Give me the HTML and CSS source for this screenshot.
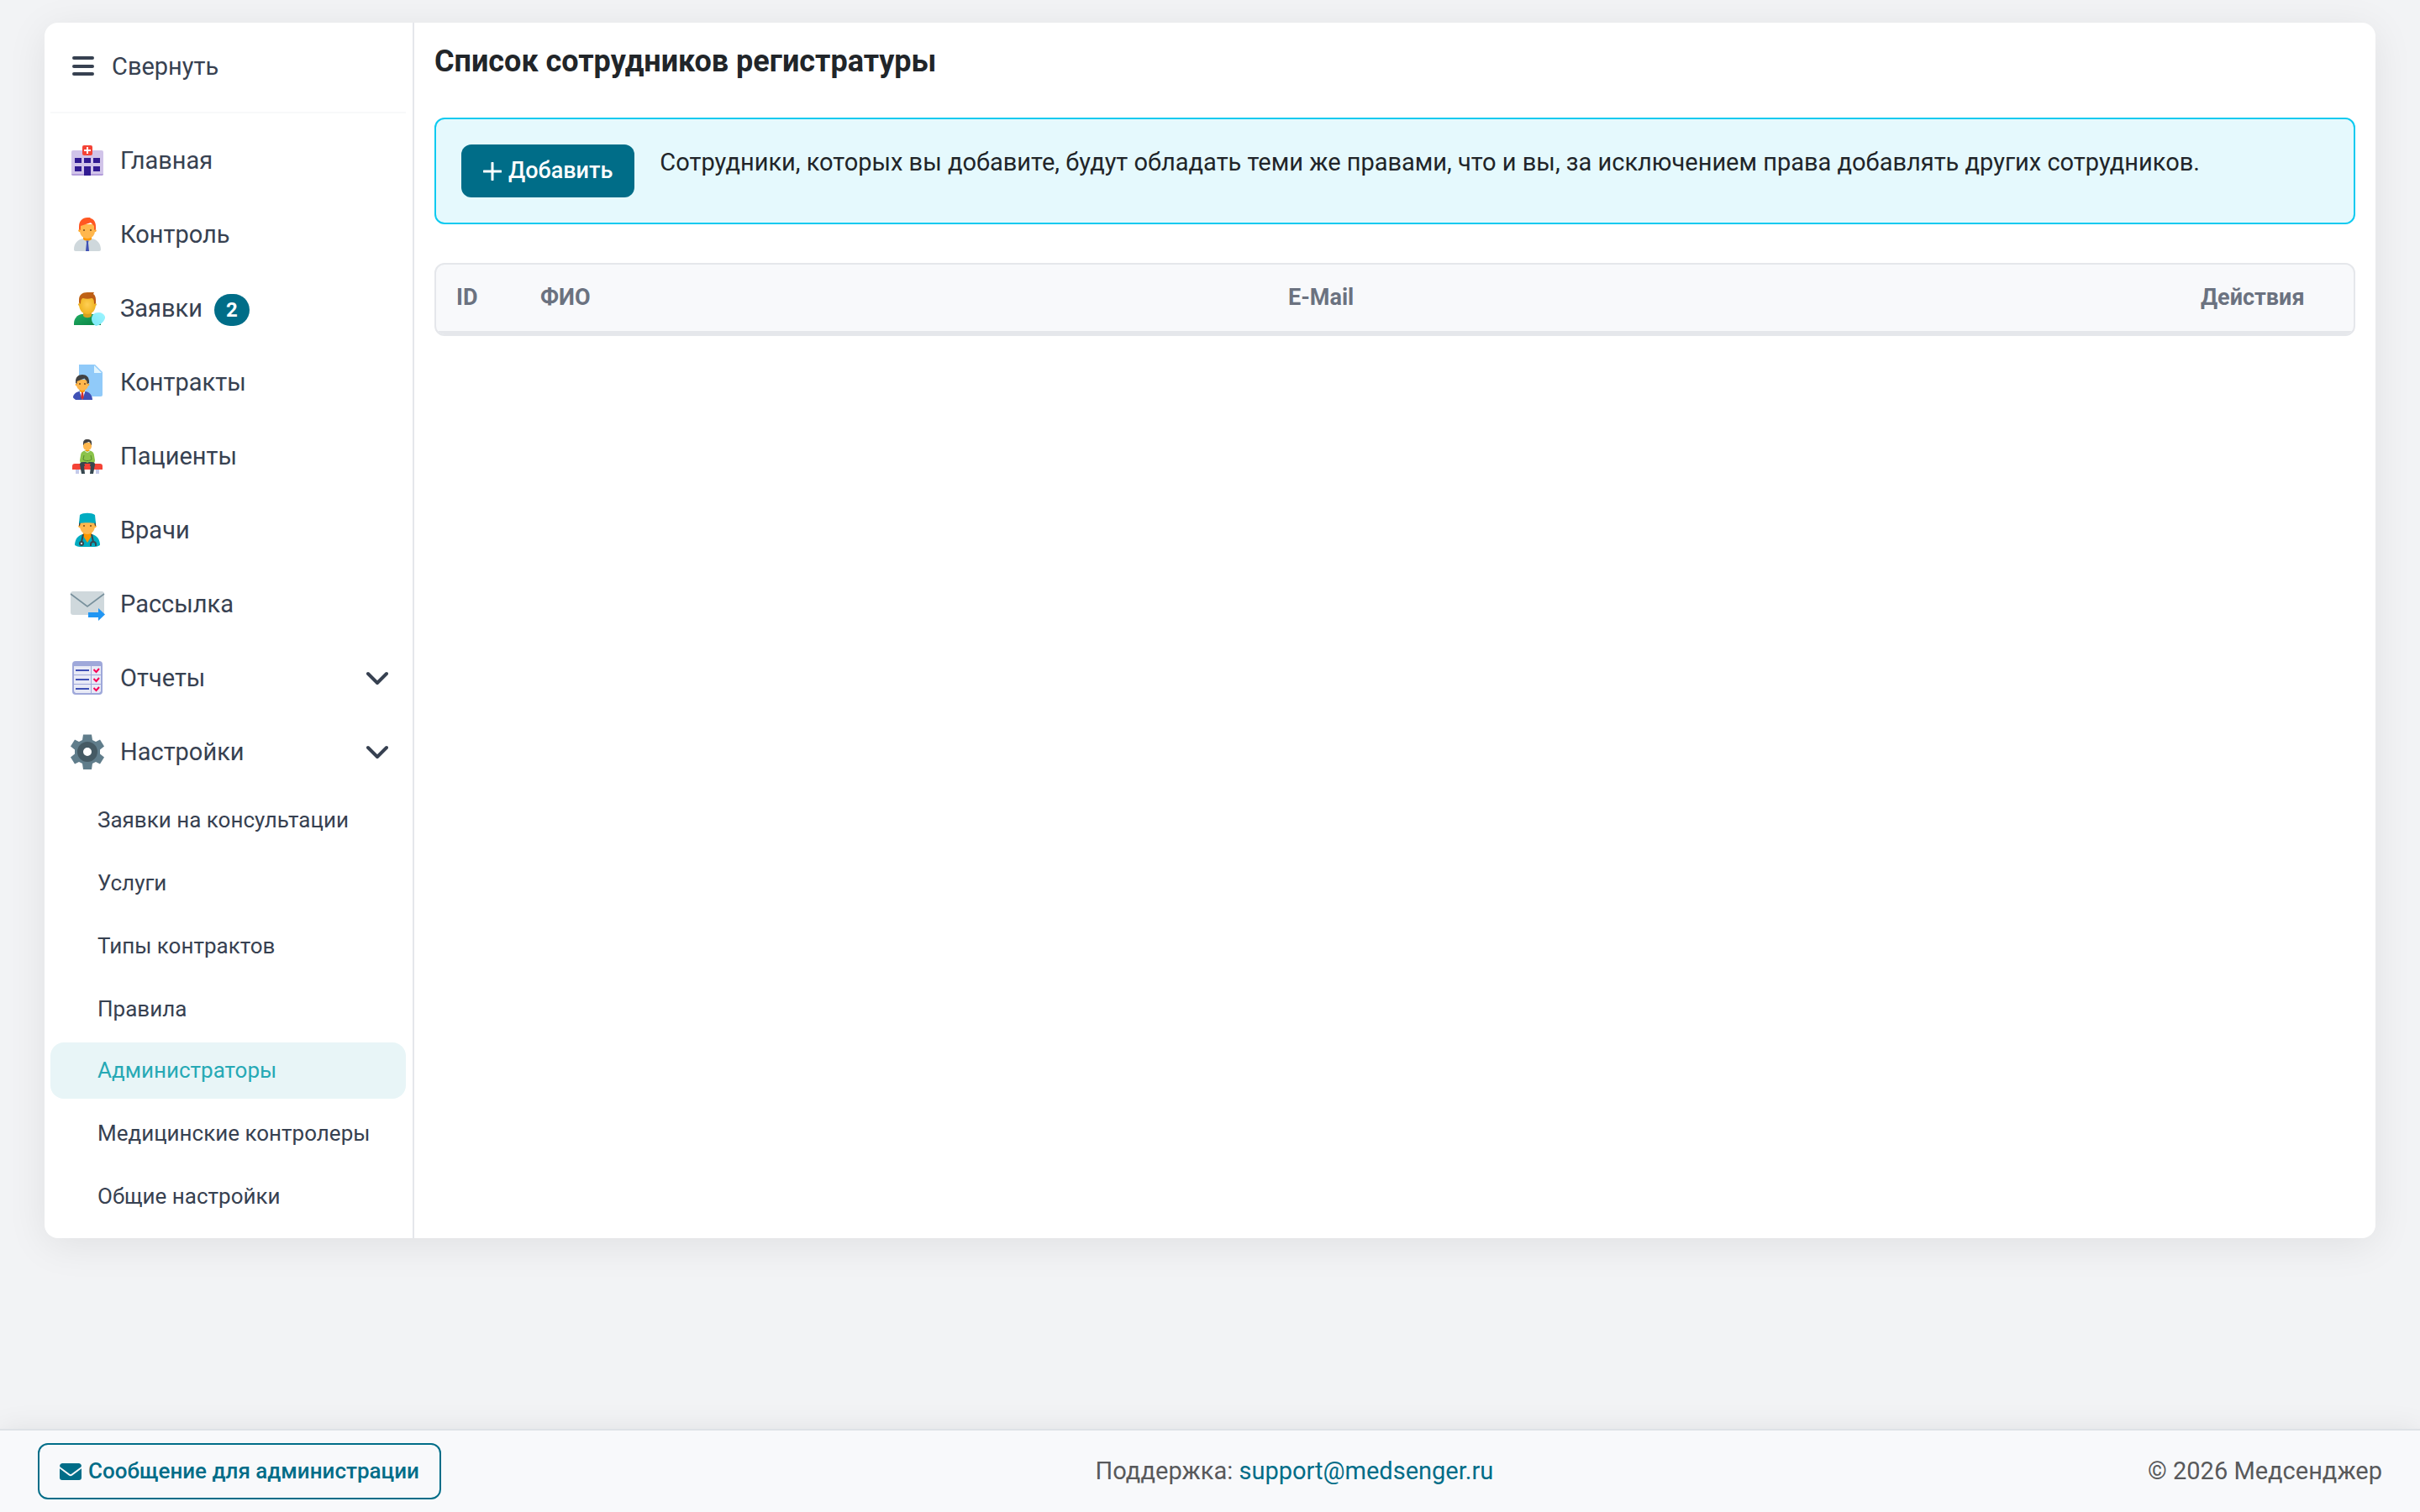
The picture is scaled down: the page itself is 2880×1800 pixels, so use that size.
FILE: index.html
```html
<!DOCTYPE html>
<html lang="ru">
    <head>
        <meta charset="utf-8" />
        <meta name="viewport" content="width=device-width, initial-scale=1" />
        <title>Список сотрудников регистратуры</title>
        <link rel="stylesheet" href="styles.css">
    </head>
    <body>
        <div class="page">
            <nav class="sidebar">
                <button class="toggle" type="button">
                    <svg class="toggle-icon" viewBox="0 0 26 24"><path d="M2 2h22M2 12h22M2 21h22"/></svg>
                    Свернуть
                </button>
                <ul class="menu">
                    <li><a class="item" href="#">
                        <svg class="icon" viewBox="0 0 48 48">
                            <path fill="#d1c4e9" d="M7 12h34a2 2 0 0 1 2 2v26a2 2 0 0 1-2 2H7a2 2 0 0 1-2-2V14a2 2 0 0 1 2-2z"/>
                            <path fill="#b39ddb" d="M5 40h38a2 2 0 0 1-2 2H7a2 2 0 0 1-2-2z"/>
                            <path fill="#311b92" d="M9 21h8v6H9zM20 21h8v6h-8zM31 21h8v6h-8zM9 31h8v6H9zM31 31h8v6h-8zM20 31h8v11h-8z"/>
                            <rect x="18" y="6" width="12" height="12" rx="2" fill="#f44336"/>
                            <path fill="#fff" d="M23 8h2v3h3v2h-3v3h-2v-3h-3v-2h3z"/>
                        </svg>
                        Главная</a></li>
                    <li><a class="item" href="#">
                        <svg class="icon" viewBox="0 0 48 48">
                            <path fill="#ff9800" d="M19 26h10v8H19z"/>
                            <path fill="#cfd8dc" d="M8 42c0-8 5-12 11-13 1 1.500 3 2 5 2s4-.5 5-2c6 1 11 5 11 13 0 1-.7 2-2 2H10c-1.300 0-2-1-2-2z"/>
                            <path fill="#ff9800" d="M19 27h10v3c-1.500 1-3 1.500-5 1.500S20.500 31 19 30z"/>
                            <path fill="#3f51b5" d="M22.500 31.500h3l-.5 2.500 1 10h-4l1-10z"/>
                            <circle cx="15" cy="19.500" r="1.700" fill="#ffa726"/>
                            <circle cx="33" cy="19.500" r="1.700" fill="#ffa726"/>
                            <path fill="#ffb74d" d="M15 12h18v8c0 5-4 9-9 9s-9-4-9-9z"/>
                            <path fill="#ff5722" d="M24 4c-6 0-10 4-10 11v3l2 1v-5l12-4 4 4v5l2-1v-3c0-5-2-9-6-10l-1-1z"/>
                            <circle cx="20" cy="19" r="1" fill="#784719"/>
                            <circle cx="28" cy="19" r="1" fill="#784719"/>
                        </svg>
                        Контроль</a></li>
                    <li><a class="item" href="#">
                        <svg class="icon" viewBox="0 0 48 48">
                            <defs>
                                <radialGradient id="face"><stop offset="0" stop-color="#ffcf54"/><stop offset="1" stop-color="#f0b421"/></radialGradient>
                                <linearGradient id="hair" x2="1" y2="1"><stop offset="0" stop-color="#c26715"/><stop offset="1" stop-color="#b85515"/></linearGradient>
                                <linearGradient id="coat" x2="1" y2="1"><stop offset="0" stop-color="#21ad64"/><stop offset="1" stop-color="#088242"/></linearGradient>
                                <linearGradient id="drop" x1="1" x2="0" y2="1"><stop offset="0" stop-color="#9ff5ff"/><stop offset="1" stop-color="#7ae8f8"/></linearGradient>
                            </defs>
                            <path fill="url(#coat)" d="M17 31h14c5 1 9 4 9 10v3H8v-2c0-6 4-10 9-11z"/>
                            <path fill="#d6a121" d="M19 27h10v6c-2 3-8 3-10 0z"/>
                            <circle cx="15" cy="19.500" r="1.800" fill="#e0a11c"/>
                            <circle cx="33" cy="19.500" r="1.800" fill="#e0a11c"/>
                            <path fill="url(#face)" d="M24 8c7 0 10 4 10 11s-4 12-10 12-10-5-10-12S17 8 24 8z"/>
                            <path fill="url(#hair)" d="M24 5h8l-1 2c2 1 3 4 3 7v4l-2 1c0-5-1-7-3-7-3 1-7 1-10 0-2 0-3 2-3 7l-2-2v-3c0-6 4-9 10-9z"/>
                            <path fill="url(#drop)" d="M37 29c4 0 7 2 8 5v2c-2 5-6 8-11 9-3-2-5-5-5-8 0-5 3-8 8-8z"/>
                        </svg>
                        Заявки <span class="badge">2</span></a></li>
                    <li><a class="item" href="#">
                        <svg class="icon" viewBox="0 0 48 48">
                            <path fill="#90caf9" d="M14 3h19l9 9v27a2 2 0 0 1-2 2H14z"/>
                            <path fill="#e1f5fe" d="M32 4v9h9z"/>
                            <path fill="#ff9800" d="M15 30h6v7h-6z"/>
                            <path fill="#3f51b5" d="M7 42c0-3 3-6 7-7h8c5 1 8 5 8 10H10c-1-1-3-2-3-3z"/>
                            <path fill="#fff" d="M14.500 34.500 18 45l3.500-10.500L18 36z"/>
                            <path fill="#d32f2f" d="M17 36h2l.8 6L18 45l-1.800-3z"/>
                            <path fill="#ff9800" d="M15 33h6v2l-3 1.500-3-1.500z"/>
                            <circle cx="11" cy="27" r="1.300" fill="#ffa726"/>
                            <circle cx="25" cy="27" r="1.300" fill="#ffa726"/>
                            <path fill="#ffb74d" d="M11 21h14v6c0 4-3 7-7 7s-7-3-7-7z"/>
                            <path fill="#424242" d="M18 15c-5 0-8 3-8 8v2l1.500 1v-3l9-3.500 3 3.500v3l2.500-1v-2c0-5-3-8-8-8z"/>
                            <circle cx="15" cy="26" r="1" fill="#784719"/>
                            <circle cx="21" cy="26" r="1" fill="#784719"/>
                        </svg>
                        Контракты</a></li>
                    <li><a class="item" href="#">
                        <svg class="icon" viewBox="0 0 48 48">
                            <path fill="#c5cae9" d="M10 39h4v6h-4zM34 39h4v6h-4z"/>
                            <path fill="#f44336" d="M6 36c0-2 1-3 3-3h30c2 0 3 1 3 3v4H6z"/>
                            <path fill="#8bc34a" d="M22 17h4c4 1 6 3 6 6l1 6c0 3-2 4-4 4H19c-2 0-4-1-4-4l1-6c0-3 2-5 6-6z"/>
                            <path fill="none" stroke="#558b2f" d="M20 23l-1 5c2 2 8 2 10 0l-1-5"/>
                            <path fill="#37474f" d="M19 31h3l2 1 2-1h3c3 0 4 1 4 3l-2 11h-4l1-9h-8l1 9h-4l-2-11c0-2 1-3 4-3z"/>
                            <path fill="#f44336" d="M20.500 33h7l-1 7h-5z"/>
                            <path fill="#eee" d="M20 17l4 2 4-2-2 2-2 1-2-1z"/>
                            <path fill="#ff9800" d="M22 14h4v4h-4z"/>
                            <path fill="#ffb74d" d="M19 8h10v4c0 3-2 5-5 5s-5-2-5-5z"/>
                            <path fill="#424242" d="M24 4c-4 0-5 2-5 5v1l1 1V9l6-2 2 2v2l1-1V8c0-3-2-4-5-4z"/>
                        </svg>
                        Пациенты</a></li>
                    <li><a class="item" href="#">
                        <svg class="icon" viewBox="0 0 48 48">
                            <path fill="#00acc1" d="M9 42c0-7 4-12 10-13h10c6 1 10 6 10 13-2 1-4 2-6 2H15c-2 0-4-1-6-2z"/>
                            <path fill="#ff9800" d="M19 27h10v4l-5 8-5-8z"/>
                            <path fill="none" stroke="#37474f" stroke-width="2" d="M19 29l-2 9M29 29l2 9M28 43v-2a3 3 0 0 1 6 0v2"/>
                            <circle cx="17" cy="40" r="2" fill="#fff" stroke="#37474f" stroke-width="2"/>
                            <circle cx="15" cy="19.500" r="1.700" fill="#ffa726"/>
                            <circle cx="33" cy="19.500" r="1.700" fill="#ffa726"/>
                            <path fill="#424242" d="M14 14h20v5H14z"/>
                            <path fill="#ffb74d" d="M16 15h16l1 4c0 6-4 10-9 10s-9-4-9-10z"/>
                            <path fill="#00acc1" d="M15 6c4-3 14-3 18 0l1 10c-6-1-14-1-20 0z"/>
                            <circle cx="20" cy="19" r="1" fill="#784719"/>
                            <circle cx="28" cy="19" r="1" fill="#784719"/>
                        </svg>
                        Врачи</a></li>
                    <li><a class="item" href="#">
                        <svg class="icon" viewBox="0 0 48 48">
                            <rect x="4" y="9" width="40" height="28" rx="3" fill="#cfd8dc"/>
                            <path fill="none" stroke="#78909c" stroke-width="1.600" d="M4 12l20 15 20-15"/>
                            <path fill="#2196f3" d="M25 34h12v-5l8 7.500-8 7.500v-4H25z"/>
                        </svg>
                        Рассылка</a></li>
                    <li><a class="item" href="#">
                        <svg class="icon" viewBox="0 0 48 48">
                            <rect x="6" y="4" width="36" height="40" rx="4" fill="#9fa8da"/>
                            <path fill="#e8eaf6" d="M8 10h20v10H8zM29 10h11v10H29zM8 21h20v10H8zM29 21h11v10H29zM8 32h20v10H10l-2-2zM29 32h11v8l-2 2h-9z"/>
                            <path fill="#3f51b5" d="M10 14h16v2H10zM10 25h16v2H10zM10 36h16v2H10z"/>
                            <path fill="none" stroke="#f50057" stroke-width="2" d="M31.500 14l3 3L38 13M31.500 25l3 3L38 24M31.500 36l3 3L38 35"/>
                        </svg>
                        Отчеты
                        <svg class="chevron" viewBox="0 0 26 18"><path d="M2 4l11 11L24 4"/></svg></a></li>
                    <li><a class="item" href="#">
                        <svg class="icon" viewBox="0 0 48 48">
                            <path fill="#607d8b" d="M19 3.500h10l1 6.500 4 2 5-2.500 5 8-5 4v5l5 4-5 8-5-2.500-4 2-1 7H19l-1-7-4-2-5 2.500-5-8 5-4v-5l-5-4 5-8 5 2.500 4-2z"/>
                            <circle cx="24" cy="24" r="8.500" fill="#fff" stroke="#455a64" stroke-width="7"/>
                        </svg>
                        Настройки
                        <svg class="chevron" viewBox="0 0 26 18"><path d="M2 4l11 11L24 4"/></svg></a></li>
                </ul>
                <ul class="submenu">
                    <li><a class="subitem" href="#">Заявки на консультации</a></li>
                    <li><a class="subitem" href="#">Услуги</a></li>
                    <li><a class="subitem" href="#">Типы контрактов</a></li>
                    <li><a class="subitem" href="#">Правила</a></li>
                    <li><a class="subitem active" href="#">Администраторы</a></li>
                    <li><a class="subitem" href="#">Медицинские контролеры</a></li>
                    <li><a class="subitem" href="#">Общие настройки</a></li>
                </ul>
            </nav>
            <main class="content">
                <h1>Список сотрудников регистратуры</h1>
                <div class="alert">
                    <button class="btn" type="button">
                        <svg class="plus" viewBox="0 0 22 22"><path d="M11 1v20M1 11h20"/></svg>
                        Добавить
                    </button>
                    <p>Сотрудники, которых вы добавите, будут обладать теми же правами, что и вы, за исключением права добавлять других сотрудников.</p>
                </div>
                <div class="table-box">
                    <table>
                        <thead>
                            <tr>
                                <th class="col-id">ID</th>
                                <th class="col-name">ФИО</th>
                                <th>E-Mail</th>
                                <th class="col-actions">Действия</th>
                            </tr>
                        </thead>
                    </table>
                </div>
            </main>
        </div>
        <footer>
            <button class="btn btn-outline" type="button">
                <svg class="mail" viewBox="0 0 26 20"><path d="M3 0h20a3 3 0 0 1 2.600 4.200L14 12.800a1.700 1.700 0 0 1-2 0L.4 4.200A3 3 0 0 1 3 0zM0 6.300l11 8.200a3.300 3.300 0 0 0 4 0l11-8.200V17a3 3 0 0 1-3 3H3a3 3 0 0 1-3-3z"/></svg>
                Сообщение для администрации
            </button>
            <span>Поддержка: <a href="mailto:support@medsenger.ru">support@medsenger.ru</a></span>
            <span>© 2026 Медсенджер</span>
        </footer>
    </body>
</html>
```

FILE: styles.css
```css
* { margin: 0; padding: 0; box-sizing: border-box; }
body {
    min-height: 100vh;
    display: flex;
    flex-direction: column;
    justify-content: space-between;
    background: #f2f3f5;
    color: #212529;
    font-family: Roboto, sans-serif;
    font-size: 29px;
    line-height: 43px;
}
ul { list-style: none; }
a { text-decoration: none; }
button { font: inherit; cursor: pointer; }

.page {
    display: flex;
    margin: 27px 53px;
    background: #fff;
    border-radius: 16px;
    box-shadow: 0 8px 48px rgba(0, 0, 0, 0.08);
}

/* боковое меню */
.sidebar {
    flex: none;
    width: 440px;
    padding: 0 8px 16px 7px;
    border-right: 2px solid #e5e7eb;
}
.toggle {
    display: flex;
    align-items: center;
    gap: 21px;
    width: 100%;
    height: 108px;
    padding: 0 26px 2px;
    background: none;
    border: 0;
    border-bottom: 2px solid #f8f9fa;
    color: #374151;
}
.toggle-icon {
    width: 26px;
    height: 24px;
    fill: none;
    stroke: #374151;
    stroke-width: 4;
    stroke-linecap: round;
}
.menu { padding-top: 12px; }
.item {
    display: flex;
    align-items: center;
    height: 88px;
    padding: 0 21px 0 20px;
    color: #374151;
}
.icon {
    flex: none;
    width: 48px;
    height: 48px;
    margin-right: 15px;
}
.badge {
    margin: 4px 0 0 14px;
    padding: 0 14px;
    background: #006d88;
    border-radius: 19px;
    color: #fff;
    font-size: 24px;
    font-weight: bold;
    line-height: 38px;
}
.chevron {
    width: 26px;
    height: 18px;
    margin-left: auto;
    fill: none;
    stroke: #374151;
    stroke-width: 4;
    stroke-linecap: round;
    stroke-linejoin: round;
}
.submenu {
    display: flex;
    flex-direction: column;
    gap: 8px;
    padding-top: 4px;
}
.subitem {
    display: block;
    padding-left: 56px;
    border-radius: 16px;
    color: #374151;
    font-size: 26px;
    line-height: 67px;
    white-space: nowrap;
}
.subitem.active {
    margin-top: -2px;
    background: #e8f5f7;
    color: #26a9b5;
}

/* содержимое */
.content {
    flex: 1;
    min-width: 0;
    padding: 24px;
}
h1 {
    margin-bottom: 45px;
    font-size: 36px;
    line-height: 44px;
}
.alert {
    display: flex;
    align-items: flex-start;
    gap: 30px;
    margin-bottom: 46px;
    padding: 30px;
    background: #e5f9fd;
    border: 2px solid #0dcaf0;
    border-radius: 12px;
}
.btn {
    display: flex;
    align-items: center;
    gap: 8px;
    height: 63px;
    padding: 0 26px;
    background: #006d88;
    border: 0;
    border-radius: 12px;
    color: #fff;
    font-size: 27px;
    font-weight: 500;
}
.plus {
    width: 22px;
    height: 22px;
    fill: none;
    stroke: #fff;
    stroke-width: 3;
    stroke-linecap: round;
}
.table-box {
    overflow: hidden;
    background: #f8f9fb;
    border: 2px solid #e5e7eb;
    border-radius: 12px;
}
table {
    width: 100%;
    table-layout: fixed;
    border-collapse: collapse;
}
th {
    padding: 18px 24px;
    border-bottom: 4px solid #e5e7eb;
    color: #6b7280;
    font-size: 27px;
    text-align: left;
}
.col-id { width: 100px; }
.col-name { width: 39%; }
.col-actions { width: 206px; }

footer {
    display: flex;
    align-items: center;
    justify-content: space-between;
    padding: 15px 45px;
    background: #f8f9fb;
    border-top: 2px solid #dee2e6;
    box-shadow: 0 0 32px rgba(0, 0, 0, 0.08);
    color: #58595b;
}
footer a { color: #006d88; }
.btn-outline {
    height: 67px;
    padding: 0 24px;
    background: none;
    border: 2px solid #006d88;
    color: #006d88;
    font-size: 26px;
}
.mail {
    width: 26px;
    height: 20px;
    fill: #006d88;
}
```
